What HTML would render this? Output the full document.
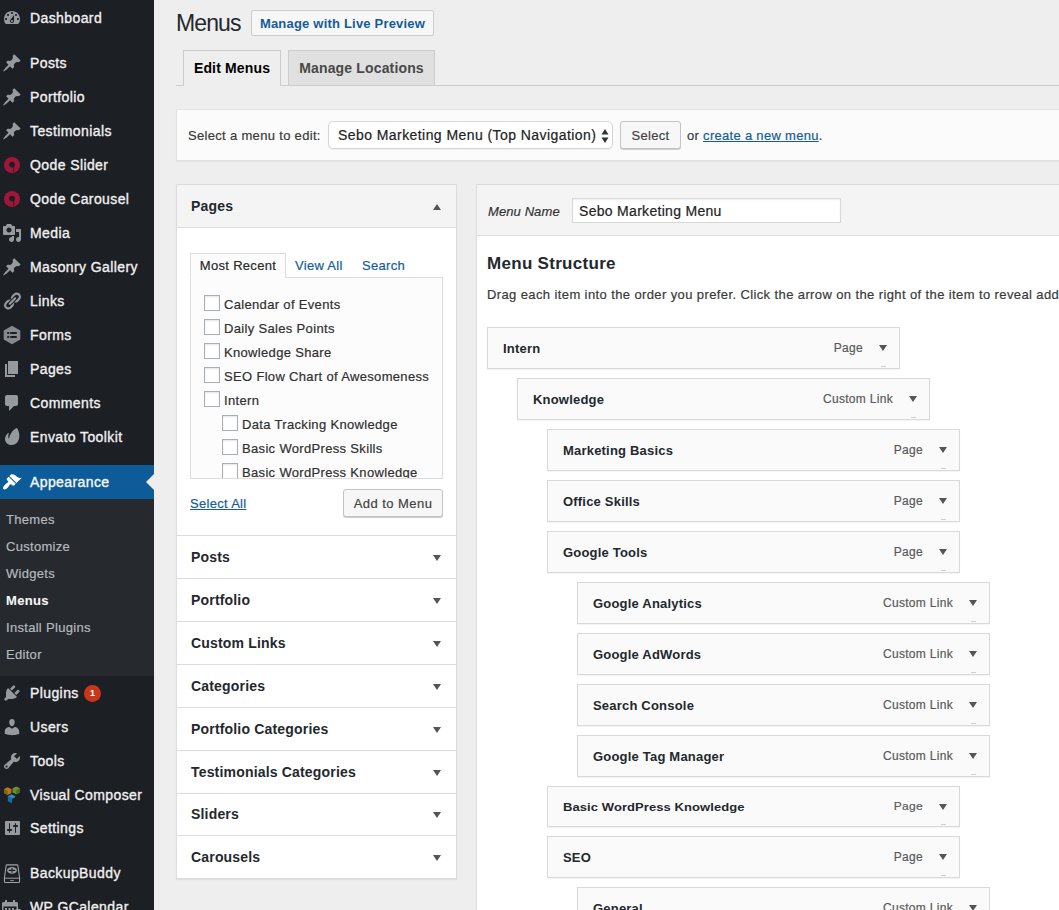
<!DOCTYPE html>
<html lang="en"><head><meta charset="utf-8"><title>Menus</title>
<style>
*{box-sizing:border-box;margin:0;padding:0}
html,body{width:1059px;height:910px;overflow:hidden}
body{background:#eeeeee;font-family:"Liberation Sans",sans-serif;font-size:13px;color:#3a3a3a;position:relative}
a{text-decoration:none;color:inherit}
i{font-style:normal}
#side{position:absolute;left:0;top:0;width:154px;height:910px;background:#1c1f24;overflow:hidden}
.mi{position:absolute;left:0;width:154px;height:34px;color:#f0f0f0;font-size:14px;line-height:18px;display:block}
.mi .ic{position:absolute;left:2px;top:7px;width:20px;height:20px;fill:#959a9f}
.mi .t{position:absolute;left:30px;top:8px;white-space:nowrap;letter-spacing:.4px;-webkit-text-stroke:.35px #f0f0f0}
.mi.gc .ic{left:1px}
.mi.cur{background:#0d5c99;color:#fff}
.mi.cur .ic{fill:#fff}
.notch{position:absolute;right:0;top:9px;width:0;height:0;border:8px solid transparent;border-right-color:#eeeeee;border-left-width:0}
.sub{position:absolute;left:0;width:154px;background:#26292e}
.si{position:absolute;left:6px;height:27px;line-height:27px;font-size:13px;color:#b4b9be;white-space:nowrap;letter-spacing:.3px;-webkit-text-stroke:.2px #b4b9be}
.si.on{color:#fff;font-weight:bold}
.badge{position:absolute;left:84px;top:9px;width:17px;height:17px;border-radius:9px;background:#c9371b;color:#fff;font-size:9px;line-height:17px;text-align:center;font-weight:bold}

h1{position:absolute;left:176px;top:9px;font-size:23px;line-height:29px;font-weight:normal;color:#23282d;letter-spacing:-.9px}
.pta{position:absolute;left:251px;top:10px;width:183px;height:26px;border:1px solid #ccc;border-radius:2px;background:#f7f7f7;color:#155c99;font-weight:bold;font-size:13px;line-height:26px;text-align:center;white-space:nowrap;letter-spacing:.2px}
.tabline{position:absolute;left:176px;top:85px;width:900px;height:1px;background:#ccc}
.tab{position:absolute;top:50px;height:35px;border:1px solid #ccc;border-bottom:none;background:#e0e0e0;color:#484848;font-weight:bold;font-size:14px;line-height:34px;text-align:center;white-space:nowrap;letter-spacing:.15px}
.tab.act{background:#eeeeee;color:#000;height:36px}
.mm{position:absolute;left:176px;top:109px;width:900px;height:52px;background:#fbfbfb;border:1px solid #e2e2e2;box-shadow:0 1px 1px rgba(0,0,0,.04)}
.mm .lb{position:absolute;left:11px;top:12px;line-height:28px;white-space:nowrap;letter-spacing:.32px}
.sel{position:absolute;left:151px;top:11px;width:285px;height:28px;border:1px solid #d6d6d6;border-radius:5px;background:#fff;font-size:14px;line-height:26px;padding-left:9px;color:#222;white-space:nowrap;letter-spacing:.43px;box-shadow:0 1px 1px rgba(0,0,0,.05)}
.sel svg{position:absolute;right:3.500px;top:6.500px;width:8px;height:14px}
.btn{position:absolute;height:28px;border:1px solid #c4c4c4;border-radius:3px;background:#f7f7f7;box-shadow:0 1px 0 #ccc;color:#444;font-size:13px;line-height:26px;text-align:center;white-space:nowrap;letter-spacing:.3px}
.mm .or{position:absolute;left:510px;top:12px;line-height:28px;white-space:nowrap;letter-spacing:.3px}
.lnk{color:#155c99;text-decoration:underline}

#col{position:absolute;left:176px;top:184px;width:281px;height:695px;background:#fff;border:1px solid #dcdcdc;box-shadow:0 1px 1px rgba(0,0,0,.06)}
.ptitle{position:absolute;left:-1px;top:-1px;width:281px;height:44px;background:#f4f4f4;border:1px solid #dcdcdc}
.at{position:absolute;left:14px;top:11px;font-size:14px;line-height:21px;font-weight:bold;color:#23282d;white-space:nowrap;letter-spacing:.18px}
.up{position:absolute;left:256px;top:19px;width:0;height:0;border:4.500px solid transparent;border-top-width:0;border-bottom:6px solid #555}
.dn{position:absolute;width:0;height:0;border:4.500px solid transparent;border-bottom-width:0;border-top:6px solid #555}
.acc{position:absolute;left:176px;width:281px;border:1px solid #dcdcdc;background:#fff}
.acc .dn{left:256px;top:19px}
.ptabs a{position:absolute;top:68px;height:25px;line-height:26px;font-size:13px;color:#155c99;white-space:nowrap;letter-spacing:.3px}
.ptabs a.on{line-height:24px;left:13px;width:96px;border:1px solid #dcdcdc;border-bottom:1px solid #fcfcfc;background:#fcfcfc;color:#2a2a2a;text-align:center;z-index:2}
.panel{position:absolute;left:13px;top:92px;width:253px;height:202px;border:1px solid #dcdcdc;background:#fcfcfc;overflow:hidden}
.ck{position:absolute;height:16px;line-height:16px;white-space:nowrap;display:block;color:#303030}
.ck i{position:absolute;left:0;top:0;width:16px;height:16px;border:1px solid #a9afb5;background:#fff;box-shadow:inset 0 1px 2px rgba(0,0,0,.1)}
.ck span{position:absolute;left:20px;top:2px;letter-spacing:.33px}
.sall{position:absolute;left:13px;top:310px;line-height:18px;letter-spacing:.3px}

#main{position:absolute;left:476px;top:184px;width:700px;height:800px;background:#fff;border:1px solid #dcdcdc}
.mhdr{position:absolute;left:0;top:0;width:700px;height:51px;background:#f4f4f4;border-bottom:1px solid #dcdcdc}
.mn{position:absolute;left:11px;top:18px;font-style:italic;line-height:18px;color:#333;white-space:nowrap;letter-spacing:.1px}
.inp{position:absolute;left:95px;top:13px;width:269px;height:25px;border:1px solid #d8d8d8;background:#fff;box-shadow:inset 0 1px 2px rgba(0,0,0,.07);font-size:14px;line-height:25px;padding-left:6px;color:#222;white-space:nowrap;letter-spacing:.3px}
h3{position:absolute;left:487px;top:253px;font-size:17px;line-height:22px;font-weight:bold;color:#23282d;white-space:nowrap;letter-spacing:.3px}
.desc{position:absolute;left:487px;top:285px;line-height:19px;white-space:nowrap;letter-spacing:.39px;color:#3a3a3a}
.it{position:absolute;width:413px;border:1px solid #d9d9d9;background:#fafafa;box-shadow:0 1px 1px rgba(0,0,0,.04)}
.it .nm{position:absolute;left:15px;top:11px;line-height:20px;font-weight:bold;color:#23282d;white-space:nowrap;letter-spacing:.2px}
.it .ty{position:absolute;right:36px;top:10px;line-height:20px;font-size:12px;color:#5a5a5a;white-space:nowrap;letter-spacing:.3px}
.it .dn{right:12px;top:17px}
.it .dots{position:absolute;right:13px;bottom:1px;width:5px;height:1px;background:#d0d0d0}
.lb,.or,.ck span,.desc,.ty,.btn,.sel,.inp,.ptabs a,.sall,.mn{-webkit-text-stroke:.2px}
.it.sq .nm{transform:scaleY(.9);transform-origin:0 0;letter-spacing:.08px}
.it.sq .ty{transform:scaleY(.9);transform-origin:0 0}
</style></head><body>
<div id="side"><a class="mi " style="top:1px"><svg class="ic" viewBox="0 0 20 20" ><path d="M3.76 16h12.48c1.1-1.37 1.76-3.11 1.76-5 0-4.42-3.58-8-8-8s-8 3.58-8 8c0 1.89.66 3.63 1.76 5zM10 4c.55 0 1 .45 1 1s-.45 1-1 1-1-.45-1-1 .45-1 1-1zM6 6c.55 0 1 .45 1 1s-.45 1-1 1-1-.45-1-1 .45-1 1-1zm8 0c.55 0 1 .45 1 1s-.45 1-1 1-1-.45-1-1 .45-1 1-1zm-5.37 5.55L12 7v6c0 1.1-.9 2-2 2s-2-.9-2-2c0-.57.24-1.08.63-1.45zM4 10c.55 0 1 .45 1 1s-.45 1-1 1-1-.45-1-1 .45-1 1-1zm12 0c.55 0 1 .45 1 1s-.45 1-1 1-1-.45-1-1 .45-1 1-1zm-5 3c0-.55-.45-1-1-1s-1 .45-1 1 .45 1 1 1 1-.45 1-1z"/></svg><span class="t">Dashboard</span></a><a class="mi " style="top:46px"><svg class="ic" viewBox="0 0 20 20" ><path d="M10.44 3.02l1.82-1.82 6.36 6.35-1.83 1.82c-1.05-.68-2.48-.57-3.41.36l-.75.75c-.92.93-1.04 2.35-.35 3.41l-1.83 1.82-2.41-2.41-2.8 2.79c-.42.42-3.38 2.71-3.8 2.29s1.86-3.39 2.28-3.81l2.79-2.79L4.1 9.36l1.83-1.82c1.05.69 2.48.57 3.4-.36l.75-.75c.93-.92 1.05-2.35.36-3.41z"/></svg><span class="t">Posts</span></a><a class="mi " style="top:80px"><svg class="ic" viewBox="0 0 20 20" ><path d="M10.44 3.02l1.82-1.82 6.36 6.35-1.83 1.82c-1.05-.68-2.48-.57-3.41.36l-.75.75c-.92.93-1.04 2.35-.35 3.41l-1.83 1.82-2.41-2.41-2.8 2.79c-.42.42-3.38 2.71-3.8 2.29s1.86-3.39 2.28-3.81l2.79-2.79L4.1 9.36l1.83-1.82c1.05.69 2.48.57 3.4-.36l.75-.75c.93-.92 1.05-2.35.36-3.41z"/></svg><span class="t">Portfolio</span></a><a class="mi " style="top:114px"><svg class="ic" viewBox="0 0 20 20" ><path d="M10.44 3.02l1.82-1.82 6.36 6.35-1.83 1.82c-1.05-.68-2.48-.57-3.41.36l-.75.75c-.92.93-1.04 2.35-.35 3.41l-1.83 1.82-2.41-2.41-2.8 2.79c-.42.42-3.38 2.71-3.8 2.29s1.86-3.39 2.28-3.81l2.79-2.79L4.1 9.36l1.83-1.82c1.05.69 2.48.57 3.4-.36l.75-.75c.93-.92 1.05-2.35.36-3.41z"/></svg><span class="t">Testimonials</span></a><a class="mi " style="top:148px"><svg class="ic" viewBox="0 0 20 20" ><circle cx="10" cy="10" r="8" fill="#a01638"/><circle cx="10" cy="9.600" r="2.900" fill="#1c1f24"/><path d="M11.400 11.800h.8v5.400h-.8z" fill="#1c1f24"/></svg><span class="t">Qode Slider</span></a><a class="mi " style="top:182px"><svg class="ic" viewBox="0 0 20 20" ><circle cx="10" cy="10" r="8" fill="#a01638"/><circle cx="10" cy="9.600" r="2.900" fill="#1c1f24"/><path d="M11.400 11.800h.8v5.400h-.8z" fill="#1c1f24"/></svg><span class="t">Qode Carousel</span></a><a class="mi " style="top:216px"><svg class="ic" viewBox="0 0 20 20" ><path d="M13 11V4c0-.55-.45-1-1-1h-1.67L9 1H5L3.67 3H2c-.55 0-1 .45-1 1v7c0 .55.45 1 1 1h10c.55 0 1-.45 1-1zM7 4.5c1.38 0 2.5 1.12 2.5 2.5S8.38 9.5 7 9.5 4.5 8.38 4.5 7 5.62 4.5 7 4.5zM14 6h5v10.5c0 1.38-1.12 2.5-2.5 2.5S14 17.880 14 16.5s1.12-2.500 2.500-2.500c.17 0 .34.020.5.050V9h-3V6zm-4 8.050V13h2v3.500c0 1.380-1.120 2.500-2.500 2.500S7 17.880 7 16.500 8.120 14 9.500 14c.170 0 .340.020.5.050z"/></svg><span class="t">Media</span></a><a class="mi " style="top:250px"><svg class="ic" viewBox="0 0 20 20" ><path d="M10.44 3.02l1.82-1.82 6.36 6.35-1.83 1.82c-1.05-.68-2.48-.57-3.41.36l-.75.75c-.92.93-1.04 2.35-.35 3.41l-1.83 1.82-2.41-2.41-2.8 2.79c-.42.42-3.38 2.71-3.8 2.29s1.86-3.39 2.28-3.81l2.79-2.79L4.1 9.36l1.83-1.82c1.05.69 2.48.57 3.4-.36l.75-.75c.93-.92 1.05-2.35.36-3.41z"/></svg><span class="t">Masonry Gallery</span></a><a class="mi " style="top:284px"><svg class="ic" viewBox="0 0 20 20" ><path d="M17.74 2.76c1.68 1.69 1.68 4.41 0 6.1l-1.53 1.52c-1.12 1.12-2.7 1.47-4.14 1.09l2.62-2.61.76-.77.76-.76c.84-.84.84-2.2 0-3.04-.84-.85-2.2-.85-3.04 0l-.77.76-3.38 3.38c-.37-1.44-.02-3.02 1.1-4.14l1.52-1.53c1.69-1.68 4.42-1.68 6.1 0zM8.59 13.43l5.34-5.34c.42-.42.42-1.1 0-1.52-.44-.43-1.13-.39-1.53 0l-5.33 5.34c-.42.42-.42 1.1 0 1.52.44.43 1.13.39 1.52 0zm-.76 2.29l4.14-4.15c.38 1.44.03 3.02-1.09 4.14l-1.52 1.53c-1.69 1.68-4.41 1.68-6.1 0-1.68-1.68-1.68-4.42 0-6.1l1.53-1.52c1.12-1.12 2.7-1.47 4.14-1.1l-4.14 4.15c-.85.84-.85 2.2 0 3.05.84.84 2.2.84 3.04 0z"/></svg><span class="t">Links</span></a><a class="mi " style="top:318px"><svg class="ic" viewBox="0 0 20 20" ><path d="M10 .8l8.300 4.700v9L10 19.200l-8.300-4.700v-9z" fill="#858a8f"/><g fill="#1c1f24"><rect x="5.200" y="7" width="2" height="2" rx=".5"/><rect x="8.200" y="7" width="6.600" height="2" rx=".5"/><rect x="5.200" y="11" width="2" height="2" rx=".5"/><rect x="8.200" y="11" width="6.600" height="2" rx=".5"/></g></svg><span class="t">Forms</span></a><a class="mi " style="top:352px"><svg class="ic" viewBox="0 0 20 20" ><path d="M6 15V2h10v13H6zm-1 1h8v2H3V5h2v11z"/></svg><span class="t">Pages</span></a><a class="mi " style="top:386px"><svg class="ic" viewBox="0 0 20 20" ><path d="M5 2h9c1.1 0 2 .9 2 2v7c0 1.1-.9 2-2 2h-2l-5 5v-5H5c-1.1 0-2-.9-2-2V4c0-1.1.9-2 2-2z"/></svg><span class="t">Comments</span></a><a class="mi " style="top:420px"><svg class="ic" viewBox="0 0 20 20" ><path transform="translate(10 10) scale(1.1) translate(-10 -10.200)" d="M14.600 2.300c1.700 2.200 3.400 8.100.6 12.200-2.300 3.300-6.700 3.900-9.400 1.800C3.300 14.300 3 10.700 5.100 7.900c.5-.7 1.300-1.500 1.700-1.600.3 0 .3.300.2.700-.4 1.500-.5 3.300-.1 4.300.1.300.4.300.5 0 .6-3.700 3.300-7.500 6.400-9.100.3-.2.600-.2.800.1z"/></svg><span class="t">Envato Toolkit</span></a><a class="mi cur" style="top:465px"><svg class="ic" viewBox="0 0 20 20" ><path d="M14.48 11.06L7.41 3.99l1.5-1.5c.5-.56 2.3-.47 3.51.32 1.21.8 1.43 1.28 2.91 2.1 1.18.64 2.45 1.26 4.45.85zm-.71.71L6.7 4.7 4.93 6.47c-.39.39-.39 1.02 0 1.41l1.06 1.06c.39.39.39 1.03 0 1.42-.6.6-1.43 1.11-2.21 1.69-.35.26-.7.53-1.01.84C1.43 14.23.4 16.08 1.4 17.07c.99 1 2.84-.03 4.18-1.36.31-.31.58-.66.85-1.02.57-.78 1.08-1.61 1.69-2.21.39-.39 1.02-.39 1.41 0l1.06 1.06c.39.39 1.02.39 1.41 0z"/></svg><span class="t">Appearance</span><i class="notch"></i></a><div class="sub" style="top:499px;height:177px"><a class="si" style="top:7px">Themes</a><a class="si" style="top:34px">Customize</a><a class="si" style="top:61px">Widgets</a><a class="si on" style="top:88px">Menus</a><a class="si" style="top:115px">Install Plugins</a><a class="si" style="top:142px">Editor</a></div><a class="mi " style="top:676px"><svg class="ic" viewBox="0 0 20 20" ><path d="M13.11 4.36L9.87 7.6 8 5.73l3.24-3.24c.35-.34 1.05-.2 1.56.32.52.51.66 1.21.31 1.55zm-8 1.77l.91-1.12 9.01 9.01-1.19.84c-.71.71-2.63 1.16-3.82 1.16H6.14L4.9 17.26c-.59.59-1.54.59-2.12 0-.59-.58-.59-1.53 0-2.12l1.24-1.24v-3.88c0-1.13.4-3.19 1.09-3.89zm7.26 3.97l3.24-3.24c.34-.35 1.04-.21 1.55.31.52.51.66 1.21.31 1.55l-3.24 3.25z"/></svg><span class="t">Plugins</span><b class="badge">1</b></a><a class="mi " style="top:710px"><svg class="ic" viewBox="0 0 20 20" ><path d="M10 9.25c-2.27 0-2.73-3.44-2.73-3.44C7 4.02 7.82 2 9.97 2c2.16 0 2.98 2.02 2.71 3.81 0 0-.41 3.44-2.68 3.44zm0 2.57L12.72 10c2.39 0 4.52 2.33 4.52 4.53v2.49s-3.65 1.13-7.24 1.13c-3.65 0-7.24-1.13-7.24-1.13v-2.49c0-2.25 1.94-4.48 4.47-4.48z"/></svg><span class="t">Users</span></a><a class="mi " style="top:744px"><svg class="ic" viewBox="0 0 20 20" ><path d="M16.68 9.77c-1.34 1.34-3.3 1.67-4.95.99l-5.41 6.52c-.99.99-2.59.99-3.58 0s-.99-2.59 0-3.57l6.52-5.42c-.68-1.65-.35-3.61.99-4.95 1.28-1.28 3.12-1.62 4.72-1.06l-2.89 2.89 2.82 2.82 2.86-2.87c.53 1.58.18 3.39-1.08 4.65zM3.81 16.21c.4.39 1.04.39 1.43 0 .4-.4.4-1.04 0-1.43-.39-.4-1.03-.4-1.43 0-.39.39-.39 1.03 0 1.43z"/></svg><span class="t">Tools</span></a><a class="mi " style="top:778px"><svg class="ic" viewBox="0 0 20 20" ><path d="M5.700 2.200l3.700 1.700v4.200L5.700 10 2 8.100V3.900z" fill="#b5791a"/><path d="M5.700 6v4L2 8.100V3.900z" fill="#8c5c12"/><path d="M14.300 1.400L18 3.300v4.100l-3.700 1.900-3.800-1.800V3.300z" fill="#6a8f2f"/><path d="M14.300 5.300v4l3.700-1.900V3.300z" fill="#4d6b20"/><path d="M9.400 9.300l3.700 1.800v1.200l-3.300 1.700v4l-3.900-2v-4.800z" fill="#2a8cc4"/><path d="M5.900 11.200l3.900 1.900v4.900l-3.900-2z" fill="#1a6a9a"/></svg><span class="t">Visual Composer</span></a><a class="mi " style="top:811px"><svg class="ic" viewBox="0 0 20 20" ><path d="M18 16V4c0-.55-.45-1-1-1H4c-.55 0-1 .45-1 1v12c0 .55.45 1 1 1h13c.55 0 1-.45 1-1zM8 11h1c.55 0 1 .45 1 1s-.45 1-1 1H8v1.500c0 .28-.22.5-.5.5s-.5-.22-.5-.5V13H6c-.55 0-1-.45-1-1s.45-1 1-1h1V5.500c0-.28.22-.5.5-.5s.5.22.5.5V11zm5-2h-1c-.55 0-1-.45-1-1s.45-1 1-1h1V5.500c0-.28.22-.5.5-.5s.5.22.5.5V7h1c.55 0 1 .45 1 1s-.45 1-1 1h-1v5.500c0 .28-.22.5-.5.5s-.5-.22-.5-.5V9z"/></svg><span class="t">Settings</span></a><a class="mi " style="top:856px"><svg class="ic" viewBox="0 0 20 20" ><path d="M5 1.900h10c.55 0 .85.300.9.800l1.650 12v3.900c0 .6-.35.9-.9.900H3.350c-.55 0-.9-.3-.9-.9v-3.900L4.100 2.700c.05-.5.35-.8.900-.8z" fill="none" stroke="#9ea3a8" stroke-width="1.100"/><path d="M2.600 15.200h14.800" stroke="#9ea3a8" stroke-width="1" fill="none"/><rect x="8.200" y="17" width="3.600" height=".9"/><ellipse cx="10" cy="7.400" rx="4.900" ry="3.400"/><path d="M6.800 7.400h6.400M10 5v4.800" stroke="#1c1f24" stroke-width="1.100" fill="none"/></svg><span class="t">BackupBuddy</span></a><a class="mi gc" style="top:890px"><svg class="ic" viewBox="0 0 20 20" ><path d="M1 6.500c0-.8.700-1.500 1.500-1.500H4V3h2v2h6V3h2v2h1.500c.8 0 1.500.7 1.500 1.500V19H1zm1.500 3V18h13V9.500zM4 11h2v2H4zm3.500 0h2v2h-2zm3.500 0h2v2h-2zM4 14.500h2v2H4zm3.500 0h2v2h-2zM14.500 12h5v2h-5z"/></svg><span class="t">WP GCalendar</span></a></div>

<h1>Menus</h1>
<a class="pta">Manage with Live Preview</a>
<div class="tabline"></div>
<a class="tab act" style="left:183px;width:98px">Edit Menus</a>
<a class="tab" style="left:288px;width:147px">Manage Locations</a>

<div class="mm">
 <span class="lb">Select a menu to edit:</span>
 <div class="sel">Sebo Marketing Menu (Top Navigation)<svg viewBox="0 0 8 14"><path d="M4 0l3.500 5.500h-7zM4 14l3.500-5.500h-7z" fill="#333"/></svg></div>
 <a class="btn" style="left:443px;top:11px;width:61px;line-height:28px">Select</a>
 <span class="or">or <a class="lnk">create a new menu</a>.</span>
</div>

<div id="col">
 <div class="ptitle"><span class="at">Pages</span><i class="up"></i></div>
 <div class="ptabs"><a class="on">Most Recent</a><a style="left:118px">View All</a><a style="left:185px">Search</a></div>
 <div class="panel"><label class="ck" style="top:17px;left:13px"><i></i><span>Calendar of Events</span></label><label class="ck" style="top:41px;left:13px"><i></i><span>Daily Sales Points</span></label><label class="ck" style="top:65px;left:13px"><i></i><span>Knowledge Share</span></label><label class="ck" style="top:89px;left:13px"><i></i><span>SEO Flow Chart of Awesomeness</span></label><label class="ck" style="top:113px;left:13px"><i></i><span>Intern</span></label><label class="ck" style="top:137px;left:31px"><i></i><span>Data Tracking Knowledge</span></label><label class="ck" style="top:161px;left:31px"><i></i><span>Basic WordPress Skills</span></label><label class="ck" style="top:185px;left:31px"><i></i><span>Basic WordPress Knowledge</span></label></div>
 <a class="lnk sall">Select All</a>
 <a class="btn" style="left:166px;top:304px;width:100px;letter-spacing:.45px;line-height:28px">Add to Menu</a>
</div>
<div class="acc" style="top:535px;height:44px"><span class="at" style="margin-top:0px">Posts</span><i class="dn" style="margin-top:0px"></i></div><div class="acc" style="top:578px;height:44px"><span class="at" style="margin-top:0px">Portfolio</span><i class="dn" style="margin-top:0px"></i></div><div class="acc" style="top:621px;height:44px"><span class="at" style="margin-top:0px">Custom Links</span><i class="dn" style="margin-top:0px"></i></div><div class="acc" style="top:664px;height:44px"><span class="at" style="margin-top:0px">Categories</span><i class="dn" style="margin-top:0px"></i></div><div class="acc" style="top:707px;height:44px"><span class="at" style="margin-top:0px">Portfolio Categories</span><i class="dn" style="margin-top:0px"></i></div><div class="acc" style="top:750px;height:44px"><span class="at" style="margin-top:0px">Testimonials Categories</span><i class="dn" style="margin-top:0px"></i></div><div class="acc" style="top:793px;height:43px"><span class="at" style="margin-top:-1px">Sliders</span><i class="dn" style="margin-top:-1px"></i></div><div class="acc" style="top:835px;height:44px"><span class="at" style="margin-top:0px">Carousels</span><i class="dn" style="margin-top:0px"></i></div>

<div id="main">
 <div class="mhdr"><span class="mn">Menu Name</span><div class="inp">Sebo Marketing Menu</div></div>
</div>
<h3>Menu Structure</h3>
<p class="desc">Drag each item into the order you prefer. Click the arrow on the right of the item to reveal additional configuration options.</p>
<div class="it" style="top:327px;left:487px;height:42px"><span class="nm">Intern</span><span class="ty">Page</span><i class="dn"></i><i class="dots"></i></div><div class="it" style="top:378px;left:517px;height:42px"><span class="nm">Knowledge</span><span class="ty">Custom Link</span><i class="dn"></i><i class="dots"></i></div><div class="it" style="top:429px;left:547px;height:42px"><span class="nm">Marketing Basics</span><span class="ty">Page</span><i class="dn"></i><i class="dots"></i></div><div class="it" style="top:480px;left:547px;height:42px"><span class="nm">Office Skills</span><span class="ty">Page</span><i class="dn"></i><i class="dots"></i></div><div class="it" style="top:531px;left:547px;height:42px"><span class="nm">Google Tools</span><span class="ty">Page</span><i class="dn"></i><i class="dots"></i></div><div class="it" style="top:582px;left:577px;height:42px"><span class="nm">Google Analytics</span><span class="ty">Custom Link</span><i class="dn"></i><i class="dots"></i></div><div class="it" style="top:633px;left:577px;height:42px"><span class="nm">Google AdWords</span><span class="ty">Custom Link</span><i class="dn"></i><i class="dots"></i></div><div class="it" style="top:684px;left:577px;height:42px"><span class="nm">Search Console</span><span class="ty">Custom Link</span><i class="dn"></i><i class="dots"></i></div><div class="it" style="top:735px;left:577px;height:42px"><span class="nm">Google Tag Manager</span><span class="ty">Custom Link</span><i class="dn"></i><i class="dots"></i></div><div class="it sq" style="top:786px;left:547px;height:41px"><span class="nm">Basic WordPress Knowledge</span><span class="ty">Page</span><i class="dn"></i><i class="dots"></i></div><div class="it" style="top:836px;left:547px;height:42px"><span class="nm">SEO</span><span class="ty">Page</span><i class="dn"></i><i class="dots"></i></div><div class="it" style="top:887px;left:577px;height:42px"><span class="nm">General</span><span class="ty">Custom Link</span><i class="dn"></i><i class="dots"></i></div>
</body></html>
